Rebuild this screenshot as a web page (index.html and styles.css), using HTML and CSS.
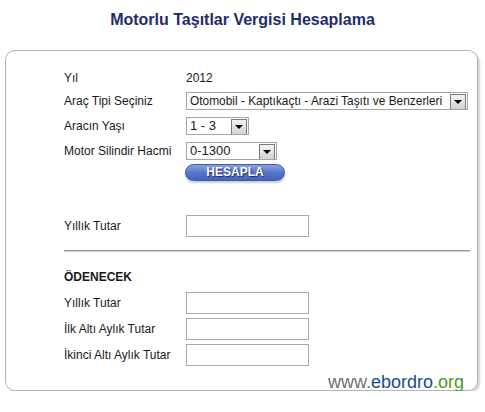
FILE: index.html
```html
<!DOCTYPE html>
<html lang="tr">
<head>
  <meta charset="UTF-8" />
  <title>Motorlu Taşıtlar Vergisi Hesaplama</title>
  <link rel="stylesheet" href="styles.css">
</head>
<body>
  <h1>Motorlu Taşıtlar Vergisi Hesaplama</h1>
  <div class="box">
    <div class="row row-year">
      <span class="label">Yıl</span>
      <span>2012</span>
    </div>
    <div class="row">
      <label class="label">Araç Tipi Seçiniz</label>
      <div class="select select-wide">
        <span class="select-text">Otomobil - Kaptıkaçtı - Arazi Taşıtı ve Benzerleri</span>
        <span class="arrow"></span>
      </div>
    </div>
    <div class="row">
      <label class="label">Aracın Yaşı</label>
      <div class="select select-age">
        <span class="select-text">1 - 3</span>
        <span class="arrow"></span>
      </div>
    </div>
    <div class="row row-motor">
      <label class="label">Motor Silindir Hacmi</label>
      <div class="select select-motor">
        <span class="select-text">0-1300</span>
        <span class="arrow"></span>
      </div>
    </div>
    <div class="row row-button">
      <span class="label"></span>
      <button type="button" class="calc">HESAPLA</button>
    </div>

    <div class="row row-input row-total">
      <span class="label">Yıllık Tutar</span>
      <input type="text" class="field" />
    </div>

    <div class="divider"></div>

    <div class="row row-head">
      <span class="label bold">ÖDENECEK</span>
    </div>
    <div class="row row-input">
      <span class="label">Yıllık Tutar</span>
      <input type="text" class="field" />
    </div>
    <div class="row row-input">
      <span class="label">İlk Altı Aylık Tutar</span>
      <input type="text" class="field" />
    </div>
    <div class="row row-input">
      <span class="label">İkinci Altı Aylık Tutar</span>
      <input type="text" class="field" />
    </div>

    <div class="brand">
      <span class="www">www.</span><span class="name">ebordro</span><span class="org">.org</span>
    </div>
  </div>
</body>
</html>
```

FILE: styles.css
```css
body {
  margin: 0;
  padding: 0;
  background: #ffffff;
  font-family: "Liberation Sans", Arial, sans-serif;
  font-size: 12px;
  color: #1a1a1a;
}
h1 {
  margin: 0;
  padding-top: 11px;
  height: 39px;
  text-align: center;
  font-size: 16px;
  font-weight: bold;
  color: #1f2d6b;
}
.box {
  margin-left: 5px;
  width: 473px;
  height: 341px;
  padding: 18px 0 0 58px;
  box-sizing: border-box;
  border: 1px solid #b3b3b3;
  border-radius: 10px;
  box-shadow: 2px 2px 2px rgba(0, 0, 0, 0.18);
}
.row {
  display: flex;
  align-items: center;
  height: 18px;
  margin-bottom: 7px;
}
.row-year {
  margin-bottom: 5px;
}
.row-motor {
  margin-bottom: 4px;
}
.row-button {
  height: 17px;
  margin-bottom: 34px;
}
.label {
  width: 122px;
  flex-shrink: 0;
}
.bold {
  font-weight: bold;
}
.select {
  position: relative;
  height: 18px;
  box-sizing: border-box;
  border: 1px solid #a5a5a5;
  background: #fff;
  font-size: 13px;
  line-height: 16px;
  padding-left: 3px;
  white-space: nowrap;
  overflow: hidden;
}
.select-wide {
  width: 282px;
  font-size: 11.9px;
}
.select-age {
  width: 63px;
}
.select-motor {
  width: 91px;
}
.arrow {
  position: absolute;
  right: 1px;
  top: 1px;
  width: 14px;
  height: 14px;
  border: 1px solid #7a7a7a;
  background: linear-gradient(#f4f4f4, #d2d2d2);
}
.arrow::after {
  content: "";
  position: absolute;
  left: 3px;
  top: 5px;
  border-left: 4px solid transparent;
  border-right: 4px solid transparent;
  border-top: 4px solid #000;
}
.calc {
  width: 100px;
  height: 17px;
  margin-left: -1px;
  padding: 0;
  border: 1px solid #3d5aa6;
  border-radius: 9px;
  background: linear-gradient(#8aa3e0, #5676cc 50%, #4464bd);
  box-shadow: 0 2px 2px rgba(0, 0, 0, 0.2);
  color: #ffffff;
  font-family: "Liberation Sans", Arial, sans-serif;
  font-size: 12px;
  font-weight: bold;
  line-height: 15px;
  text-shadow: 1px 1px 1px #1c2e66;
}
.row-input {
  height: 22px;
  margin-bottom: 4px;
}
.row-total {
  margin-bottom: 13px;
}
.field {
  width: 123px;
  height: 22px;
  box-sizing: border-box;
  margin: 0;
  border: 1px solid #aaaaaa;
  padding: 2px;
}
.divider {
  width: 406px;
  height: 0;
  border-top: 1px solid #9a9a9a;
  border-bottom: 1px solid #d0d0d0;
  margin-bottom: 16px;
}
.row-head {
  margin-bottom: 6px;
}
.brand {
  text-align: right;
  padding-right: 13px;
  margin-top: 6px;
  font-size: 18px;
}
.www {
  color: #707070;
}
.name {
  color: #1e4a8c;
}
.org {
  color: #4b9a1e;
}
```
